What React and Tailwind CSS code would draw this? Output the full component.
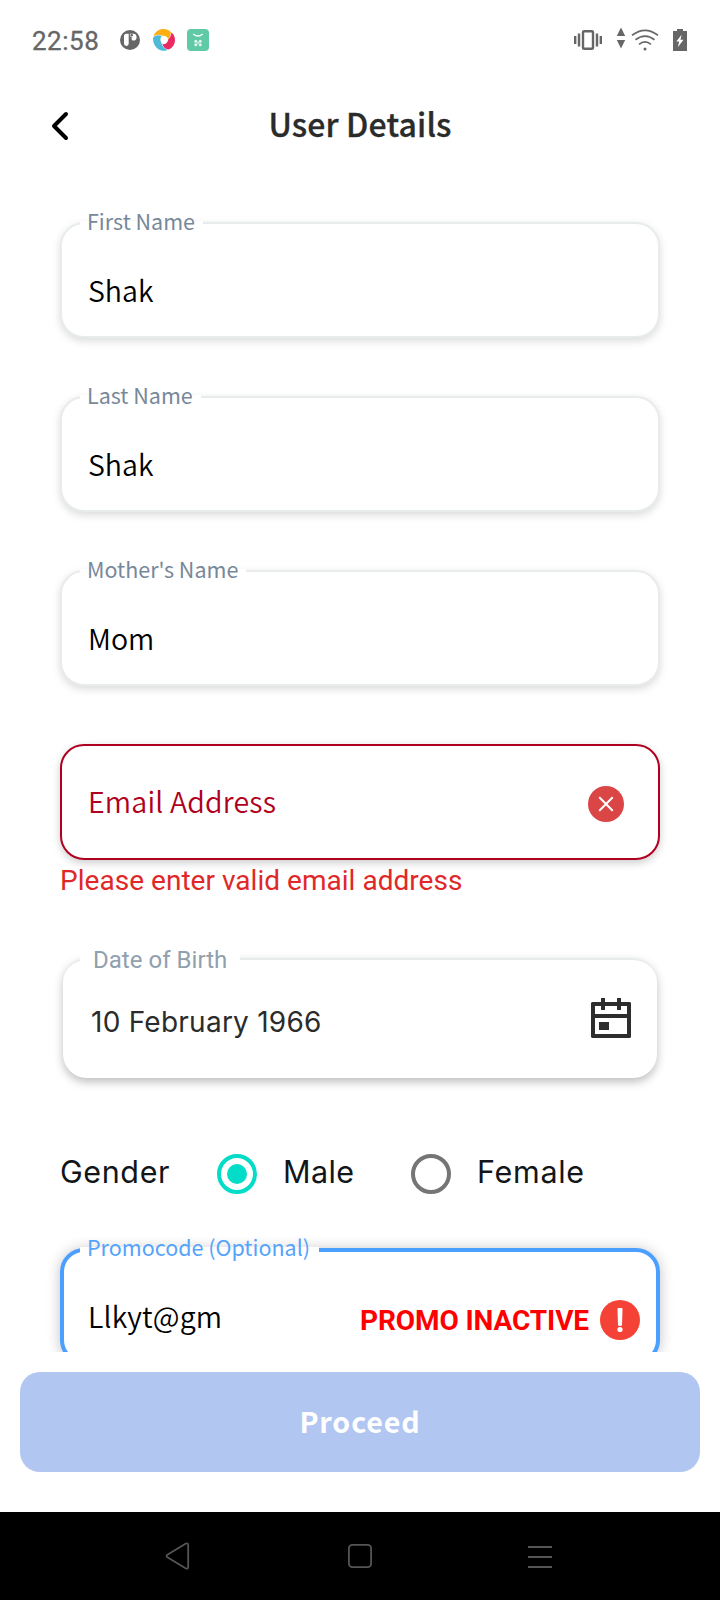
import React from 'react';

const SANS = "font-['Noto_Sans_CJK_JP',sans-serif]";

function StatusBar() {
  return (
    <header className="flex h-[80px] shrink-0 items-center justify-between pr-[33px] pl-[32px]">
      <div className="flex items-center">
        <span className="mt-[2px] w-[67px] font-['Roboto',sans-serif] text-[26px] leading-[30px] tracking-[0.500px] text-[#666] [-webkit-text-stroke:0.3px_#666]">22:58</span>
        <svg className="ml-[21px]" width="20" height="20" viewBox="0 0 20 20">
          <circle cx="10" cy="10" r="10" fill="#666" />
          <path d="M4 6.5Q4 3.800 6.300 3.800H8.700V13.600Q8.700 16 6.400 16Q4 16 4 13.600Z" fill="#fff" />
          <path d="M9.900 3.800H13.200A3.400 3.400 0 0 1 13.200 10.600Q11.600 10.600 11.600 9V7Q9.900 7 9.900 5.500Z" fill="#fff" />
          <circle cx="11.700" cy="5.200" r="1.300" fill="#666" />
        </svg>
        <svg className="ml-[13px]" width="22" height="22" viewBox="0 0 22 22">
          <path d="M0.400 7.600C2 2.500 6 0 10.500 0C14 0 16.600 1.300 18 3.500C17.600 6 17 8 15.200 10.200C14.500 7.500 12 6.300 9.500 6.800C6 5 3 5.500 0.400 7.600Z" fill="#fdae13" />
          <path d="M18.400 3.600C21 5.500 22 8.500 22 11C22 15.500 19 19.500 15.500 20.600C12.500 20 10.500 18.500 9.300 15.300C12.500 15.600 14.800 14 15.200 10.600C17.200 8.500 18.200 6.500 18.400 3.600Z" fill="#ea2a63" />
          <path d="M0.200 8.500C2.500 6.200 5.500 5.600 9 7C7 8.800 6.800 11.500 8.600 14.500C9.600 17.800 11.500 19.800 14.800 21C12.500 22.200 8 22.200 5 20C1.500 17.500 -0.400 13.500 0.200 8.500Z" fill="#4fb9d8" />
        </svg>
        <svg className="ml-[12px]" width="22" height="22" viewBox="0 0 22 22">
          <rect width="22" height="22" rx="4" fill="#60c9a5" />
          <path d="M6.300 5Q11 9.200 15.700 5" fill="none" stroke="#fff" strokeWidth="1.400" />
          <g fill="#e4f6ef">
            <circle cx="8.800" cy="12.200" r="1.500" />
            <circle cx="13.200" cy="12.200" r="1.500" />
            <circle cx="8.800" cy="15.800" r="1.500" />
            <circle cx="13.200" cy="15.800" r="1.500" />
            <rect x="10" y="13" width="2" height="2" opacity="0.600" />
          </g>
        </svg>
      </div>
      <div className="flex items-center">
        <svg width="28" height="20" viewBox="0 0 28 20" fill="#666">
          <rect x="0" y="6" width="2.400" height="8" />
          <rect x="3.800" y="3.500" width="2.400" height="13" />
          <rect x="9" y="1.200" width="10" height="17.600" rx="1" fill="none" stroke="#666" strokeWidth="2.400" />
          <rect x="21.800" y="3.500" width="2.400" height="13" />
          <rect x="25.600" y="6" width="2.400" height="8" />
        </svg>
        <svg className="mb-[4px] ml-[14px]" width="10" height="22" viewBox="0 0 10 22" fill="#666">
          <path d="M5 0.500L9.200 9H0.800Z" />
          <path d="M0.800 13H9.200L5 21.500Z" />
        </svg>
        <svg className="ml-[5px]" width="28" height="22" viewBox="0 0 28 22" fill="none" stroke="#666" strokeWidth="1.700">
          <path d="M1 6.300Q14 -3.600 27 6.300" />
          <path d="M4.500 10.800Q14 3.600 23.500 10.800" />
          <path d="M8 15.300Q14 10.500 20 15.300" />
          <circle cx="14" cy="20" r="1.500" fill="#666" stroke="none" />
        </svg>
        <svg className="ml-[14px]" width="14" height="22" viewBox="0 0 14 22">
          <path d="M4 0H10V2H14V22H0V2H4Z" fill="#666" />
          <path d="M8.600 5.800L3.300 12.600H6.200L4.800 18.300L10.500 10.700H7.500Z" fill="#fff" />
        </svg>
      </div>
    </header>
  );
}

function TitleBar() {
  return (
    <div className="grid h-[92px] shrink-0 grid-cols-[52px_1fr_52px] items-center">
      <svg className="ml-[50px]" width="20" height="30" viewBox="0 0 20 30" fill="none" stroke="#000" strokeWidth="4" strokeLinecap="round" strokeLinejoin="round">
        <path d="M16 3L4 15L16 27" />
      </svg>
      <h1 className={`${SANS} pb-[6px] text-center text-[32px] leading-[40px] font-medium tracking-[0.130px] text-[#2b2b2b] [-webkit-text-stroke:0.3px_#2b2b2b]`}>User Details</h1>
    </div>
  );
}

function Field({ label, value }) {
  return (
    <div className="relative mb-[58px] h-[116px] rounded-[24px] border-2 border-[#e8ecec] bg-white pt-[46px] pl-[26px] shadow-[0_3px_8px_rgba(0,0,0,0.15)]">
      <label className={`${SANS} absolute top-[-15px] left-[18px] isolate pr-[8px] pl-[7px] text-[21.500px] leading-[24px] whitespace-nowrap text-[#778899] before:absolute before:inset-x-0 before:top-[12px] before:-z-10 before:h-[4px] before:bg-white`}>
        {label}
      </label>
      <div className={`${SANS} text-[28.500px] leading-[40px] font-[350] text-black`}>{value}</div>
    </div>
  );
}

function EmailField() {
  return (
    <div>
      <div className="flex h-[116px] items-center justify-between rounded-[24px] border-2 border-[#b00020] bg-white pr-[34px] pl-[26px] shadow-[0_3px_9px_rgba(0,0,0,0.2)]">
        <span className={`${SANS} pb-[2px] text-[28.600px] leading-[40px] font-[350] tracking-[0.150px] text-[#b00020]`}>Email Address</span>
        <svg className="mt-[4px]" width="36" height="36" viewBox="0 0 36 36">
          <circle cx="18" cy="18" r="18" fill="#da4646" />
          <path d="M11.800 11.800L24.200 24.200M24.200 11.800L11.800 24.200" stroke="#fff" strokeWidth="2" strokeLinecap="round" />
        </svg>
      </div>
      <p className="pt-px font-['Roboto',sans-serif] text-[28px] leading-[40px] tracking-[0.030px] text-[#e02828]">Please enter valid email address</p>
    </div>
  );
}

function DateField() {
  return (
    <div className="relative mx-[3px] mt-[57px] flex h-[120px] items-start justify-between rounded-[24px] border-t-2 border-[#e8ecec] bg-white pt-[41px] pr-[26px] pl-[28px] shadow-[0_4px_10px_rgba(0,0,0,0.26)]">
      <label className="absolute top-[-14px] left-[17px] isolate pr-[13px] pl-[13px] font-['Roboto',sans-serif] text-[24px] leading-[28px] tracking-[0.030px] whitespace-nowrap text-[#90a0ae] before:absolute before:inset-x-0 before:top-[4px] before:-z-10 before:h-[12px] before:bg-white">
        Date of Birth
      </label>
      <span className="mt-px font-['Inter',sans-serif] text-[28px] leading-[40px] tracking-[0.250px] text-[#2b2b2b]">10 February 1966</span>
      <svg className="mt-[-3px]" width="40" height="40" viewBox="0 0 40 40" fill="#2d2d2d">
        <path fillRule="evenodd" d="M1 4H39L40 5V39L39 40H1L0 39V5ZM4 8V16H36V8ZM4 20V36H36V20Z" />
        <rect x="10" width="4" height="12" />
        <rect x="26" width="4" height="12" />
        <rect x="8" y="24" width="10" height="8" />
      </svg>
    </div>
  );
}

function GenderRow() {
  const text = "font-['Inter',sans-serif] text-[30.500px] leading-[36px] pb-[4px] text-[#121619]";
  return (
    <div className="mt-[76px] flex h-[40px] items-center">
      <span className={`${text} w-[157px] tracking-[0.600px]`}>Gender</span>
      <span className="flex size-[40px] items-center justify-center rounded-full border-4 border-[#03dcc6]">
        <span className="size-[20px] rounded-full bg-[#03dcc6]" />
      </span>
      <span className={`${text} w-[154px] pl-[26px] tracking-[0.400px]`}>Male</span>
      <span className="size-[40px] rounded-full border-4 border-[#757575]" />
      <span className={`${text} pl-[26px] tracking-[0.700px]`}>Female</span>
    </div>
  );
}

function PromoField() {
  return (
    <div className="relative mt-[54px] flex h-[116px] items-start justify-between rounded-[24px] border-4 border-[#4b9fff] bg-white pr-[16px] pl-[24px] shadow-[0_1px_14px_rgba(0,0,0,0.24)]">
      <label className={`${SANS} absolute top-[-17px] left-[16px] isolate pr-[8.700px] pl-[7px] text-[21.500px] leading-[24px] whitespace-nowrap text-[#55a3fb] before:absolute before:inset-x-0 before:top-[12px] before:-z-10 before:h-[6px] before:bg-white`}>
        Promocode (Optional)
      </label>
      <span className={`${SANS} mt-[44px] text-[28.600px] leading-[40px] font-[350] tracking-[0.150px] text-black`}>Llkyt@gm</span>
      <div className="mt-[48px] flex items-center">
        <span className="pt-[2px] font-['Roboto',sans-serif] text-[28px] leading-[38px] font-bold tracking-[-0.100px] text-[#ff0000]">PROMO INACTIVE</span>
        <svg className="ml-[11px]" width="40" height="40" viewBox="0 0 40 40">
          <circle cx="20" cy="20" r="20" fill="#f44336" />
          <path d="M17.500 9Q17.500 8 18.500 8H21.500Q22.500 8 22.500 9L22 25Q22 26 20 26Q18 26 18 25Z" fill="#fff" />
          <circle cx="20" cy="29.500" r="2.600" fill="#fff" />
        </svg>
      </div>
    </div>
  );
}

function NavBar() {
  return (
    <nav className="flex h-[88px] shrink-0 items-center justify-between bg-black pr-[167px] pl-[165px]">
      <svg width="26" height="28" viewBox="0 0 26 28" fill="none" stroke="#555" strokeWidth="1.800" strokeLinejoin="round">
        <path d="M2.400 12.700L20.500 1.800Q23.200 0.500 23.200 3.500V24.500Q23.200 27.500 20.500 26.200L2.400 15.300Q0.700 14 2.400 12.700Z" />
      </svg>
      <svg className="ml-px" width="24" height="24" viewBox="0 0 24 24" fill="none" stroke="#555" strokeWidth="1.800">
        <rect x="0.900" y="0.900" width="22.200" height="22.200" rx="3.500" />
      </svg>
      <svg className="mt-[2px]" width="26" height="24" viewBox="0 0 26 24" fill="#555">
        <rect x="1" y="1" width="24" height="2" />
        <rect x="1" y="11" width="24" height="2" />
        <rect x="1" y="21" width="24" height="2" />
      </svg>
    </nav>
  );
}

export default function App() {
  return (
    <div className="flex h-[1600px] w-[720px] flex-col overflow-hidden bg-white">
      <StatusBar />
      <TitleBar />
      <main className="min-h-0 flex-1 overflow-hidden px-[60px] pt-[50px]">
        <Field label="First Name" value="Shak" />
        <Field label="Last Name" value="Shak" />
        <Field label="Mother's Name" value="Mom" />
        <EmailField />
        <DateField />
        <GenderRow />
        <PromoField />
      </main>
      <div className="h-[160px] shrink-0 px-[20px] pt-[20px]">
        <button className={`${SANS} h-[100px] w-full rounded-[20px] bg-[#b1c7f2] pb-[2px] text-[28.600px] leading-[40px] font-bold tracking-[0.900px] text-white`}>
          Proceed
        </button>
      </div>
      <NavBar />
    </div>
  );
}
